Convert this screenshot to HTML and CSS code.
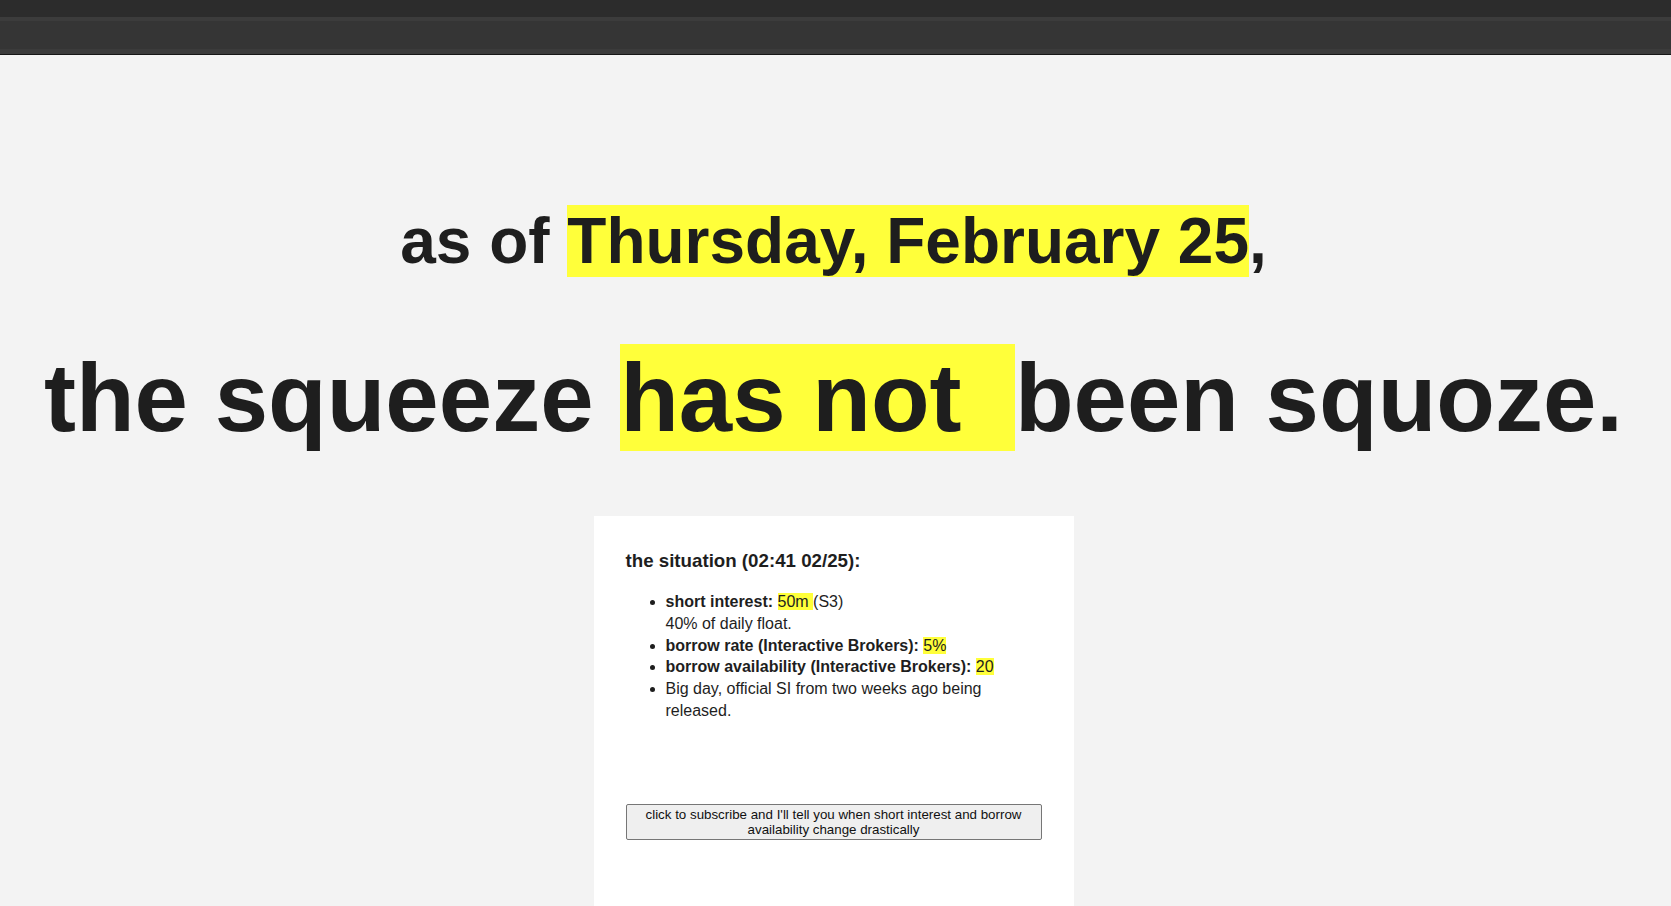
FILE: index.html
```html
<!DOCTYPE html>
<html lang="en">
<head>
<meta charset="utf-8">
<title>has the squeeze been squozen?</title>
<link rel="stylesheet" href="styles.css">
</head>
<body>
<div class="topbar">
  <div class="bar-a"></div>
  <div class="bar-b"></div>
  <div class="bar-c"></div>
  <div class="bar-d"></div>
  <div class="bar-e"></div>
</div>
<main class="page">
  <h1 class="date-line">as of <span class="hl">Thursday, February 25</span>,</h1>
  <h2 class="verdict">the squeeze <span class="hl">has not&nbsp; </span>been squoze.</h2>
  <section class="card">
    <h3 class="card-title">the situation (02:41 02/25):</h3>
    <ul class="facts">
      <li><b>short interest:</b> <span class="hl">50m </span>(S3)<br>40% of daily float.</li>
      <li><b>borrow rate (Interactive Brokers):</b> <span class="hl">5%</span></li>
      <li><b>borrow availability (Interactive Brokers):</b> <span class="hl">20</span></li>
      <li>Big day, official SI from two weeks ago being released.</li>
    </ul>
    <button class="subscribe" type="button">click to subscribe and I'll tell you when short interest and borrow availability change drastically</button>
  </section>
</main>
</body>
</html>
```

FILE: styles.css
```css
html, body {
  margin: 0;
  padding: 0;
  height: 100%;
  overflow: hidden;
}

body {
  background: #f3f3f3;
  color: #1e1e1e;
  font-family: "Liberation Sans", Arial, sans-serif;
}

.topbar {
  display: flex;
  flex-direction: column;
}
.bar-a { height: 17px; background: #2c2c2c; }
.bar-b { height: 4px; background: #3c3c3c; }
.bar-c { height: 28px; background: #353535; }
.bar-d { height: 5px; background: #3b3b3b; }
.bar-e { height: 1px; background: #161616; }

.page {
  display: flex;
  flex-direction: column;
  align-items: center;
  padding-right: 4px;
}

.hl {
  background: #ffff3a;
}

.date-line {
  margin: 149px 0 0;
  font-size: 64px;
  font-weight: bold;
  line-height: normal;
  text-align: center;
}

.verdict {
  margin: 65px 0 0;
  font-size: 96px;
  font-weight: bold;
  line-height: normal;
  text-align: center;
  white-space: nowrap;
}

.card {
  margin-top: 63px;
  width: 480px;
  box-sizing: border-box;
  min-height: 400px;
  background: #ffffff;
  padding: 34px 32px 40px;
  color: #1e1e1e;
}

.card-title {
  margin: 0;
  font-size: 18.72px;
  font-weight: bold;
  line-height: normal;
}

.facts {
  margin: 19px 0 0;
  padding-left: 40px;
  font-size: 16px;
  line-height: 21.8px;
}

.facts b {
  font-weight: bold;
}

.subscribe {
  display: block;
  width: 100%;
  margin-top: 82px;
  padding: 2px 6px 2px;
  font-family: "Liberation Sans", Arial, sans-serif;
  font-size: 13.33px;
  line-height: 15.3px;
  color: #111;
  background: #efefef;
  border: 1px solid #767676;
  border-radius: 2px;
  text-align: center;
}
```
